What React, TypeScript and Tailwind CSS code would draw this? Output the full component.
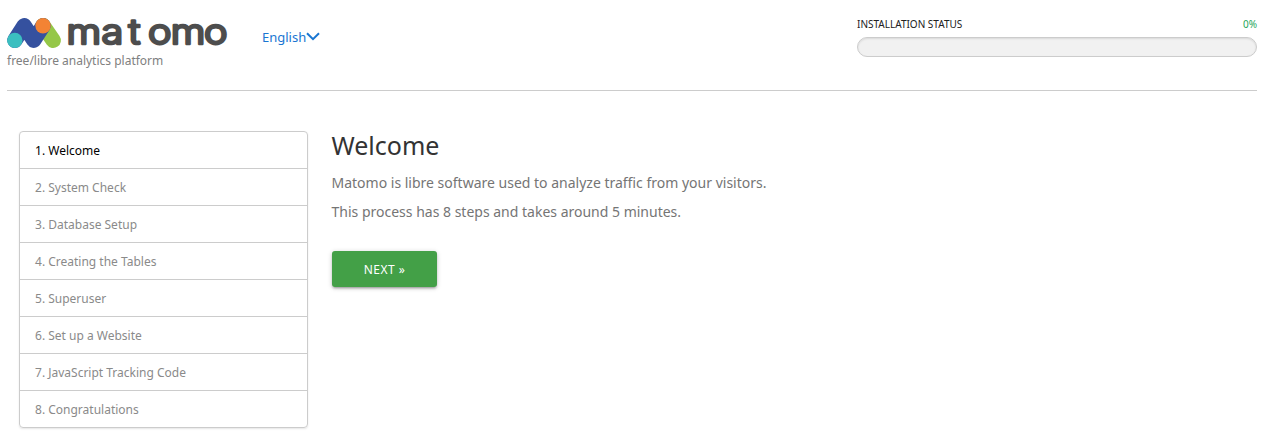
const steps = ['Welcome', 'System Check', 'Database Setup', 'Creating the Tables', 'Superuser', 'Set up a Website', 'JavaScript Tracking Code', 'Congratulations'];

function Logo() {
  return (
    <svg width="222" height="36" viewBox="6 14 222 36" className="block overflow-visible" role="img" aria-label="Matomo">
      <path d="M43 25.7 L53.2 40.3" stroke="#95c748" strokeWidth="15.4" strokeLinecap="round" />
      <path d="M14.9 40.2 L24.2 25.8 L33.8 40.2 L43 25.8" fill="none" stroke="#35519f" strokeWidth="15.4" strokeLinecap="round" strokeLinejoin="round" />
      <circle cx="14.8" cy="40.4" r="7.7" fill="#3bbfc0" />
      <circle cx="43" cy="25.7" r="7.7" fill="#f38334" />
      <text transform="scale(1.15 1)" y="44.5" x="57.8 88.2 111.8 128.7 148.4 177.4" fontFamily="Inter, sans-serif" fontSize="34.5" fontWeight="300" fill="#4d4d4d" stroke="#4d4d4d" strokeWidth="2.6" strokeLinejoin="round">matomo</text>
    </svg>
  );
}

export default function App() {
  return (
    <div className="h-[440px] overflow-hidden bg-white pl-[7px] pr-[19px] font-['Noto_Sans',sans-serif] text-[#757575]">
      <header className="flex h-[91px] border-b border-[#ccc]">
        <div className="-ml-px w-[256px] pt-[14px]">
          <Logo />
          <div className="ml-px mt-px text-[12px] leading-[20px] text-[#808080]">free/libre analytics platform</div>
        </div>
        <a className="mt-[27px] flex h-[20px] text-[13px] leading-[20px] text-[#1976d2]">
          English
          <svg width="14" height="10" viewBox="0 0 14 10" className="mt-[4.5px]" fill="none" stroke="currentColor" strokeWidth="2"><path d="M1 1.2 7 7.2 13 1.2" /></svg>
        </a>
        <div className="ml-auto w-[400px] pt-[17px]">
          <div className="flex justify-between text-[10px] leading-[14px] text-[#212121]">
            <span>INSTALLATION STATUS</span>
            <span className="text-[#26a65b]">0%</span>
          </div>
          <div className="mt-[6px] h-[20px] rounded-[10px] border border-[#ccc] bg-[#f1f1f1] shadow-[inset_0_1px_2px_rgba(0,0,0,0.1)]" />
        </div>
      </header>
      <main className="flex pl-[12px] pt-[40px]">
        <ol className="w-[289px] rounded-[4px] border border-[#ccc] text-[12px] shadow-[0_1px_2px_rgba(0,0,0,0.1)]">
          {steps.map((step, i) => (
            <li key={step} className={`h-[37px] border-b border-[#ccc] pl-[15px] pt-px leading-[36px] last:h-[36px] last:border-b-0 ${i === 0 ? 'text-black' : 'text-[#8a8a8a]'}`}>
              {i + 1}. {step}
            </li>
          ))}
        </ol>
        <section className="ml-[23.5px] -mt-px">
          <h1 className="text-[25px] leading-[30px] text-[#333]">Welcome</h1>
          <p className="mt-[13px] text-[14px] leading-[20px]">Matomo is libre software used to analyze traffic from your visitors.</p>
          <p className="mt-[9px] text-[14px] leading-[20px]">This process has 8 steps and takes around 5 minutes.</p>
          <button className="mt-[29px] ml-[0.5px] block h-[36px] w-[105px] rounded-[3px] bg-[#43a047] pt-px text-[12px] leading-[36px] tracking-[0.5px] text-white shadow-[0_2px_2px_rgba(0,0,0,0.14),0_3px_1px_-2px_rgba(0,0,0,0.12),0_1px_5px_rgba(0,0,0,0.2)]">NEXT »</button>
        </section>
      </main>
    </div>
  );
}
